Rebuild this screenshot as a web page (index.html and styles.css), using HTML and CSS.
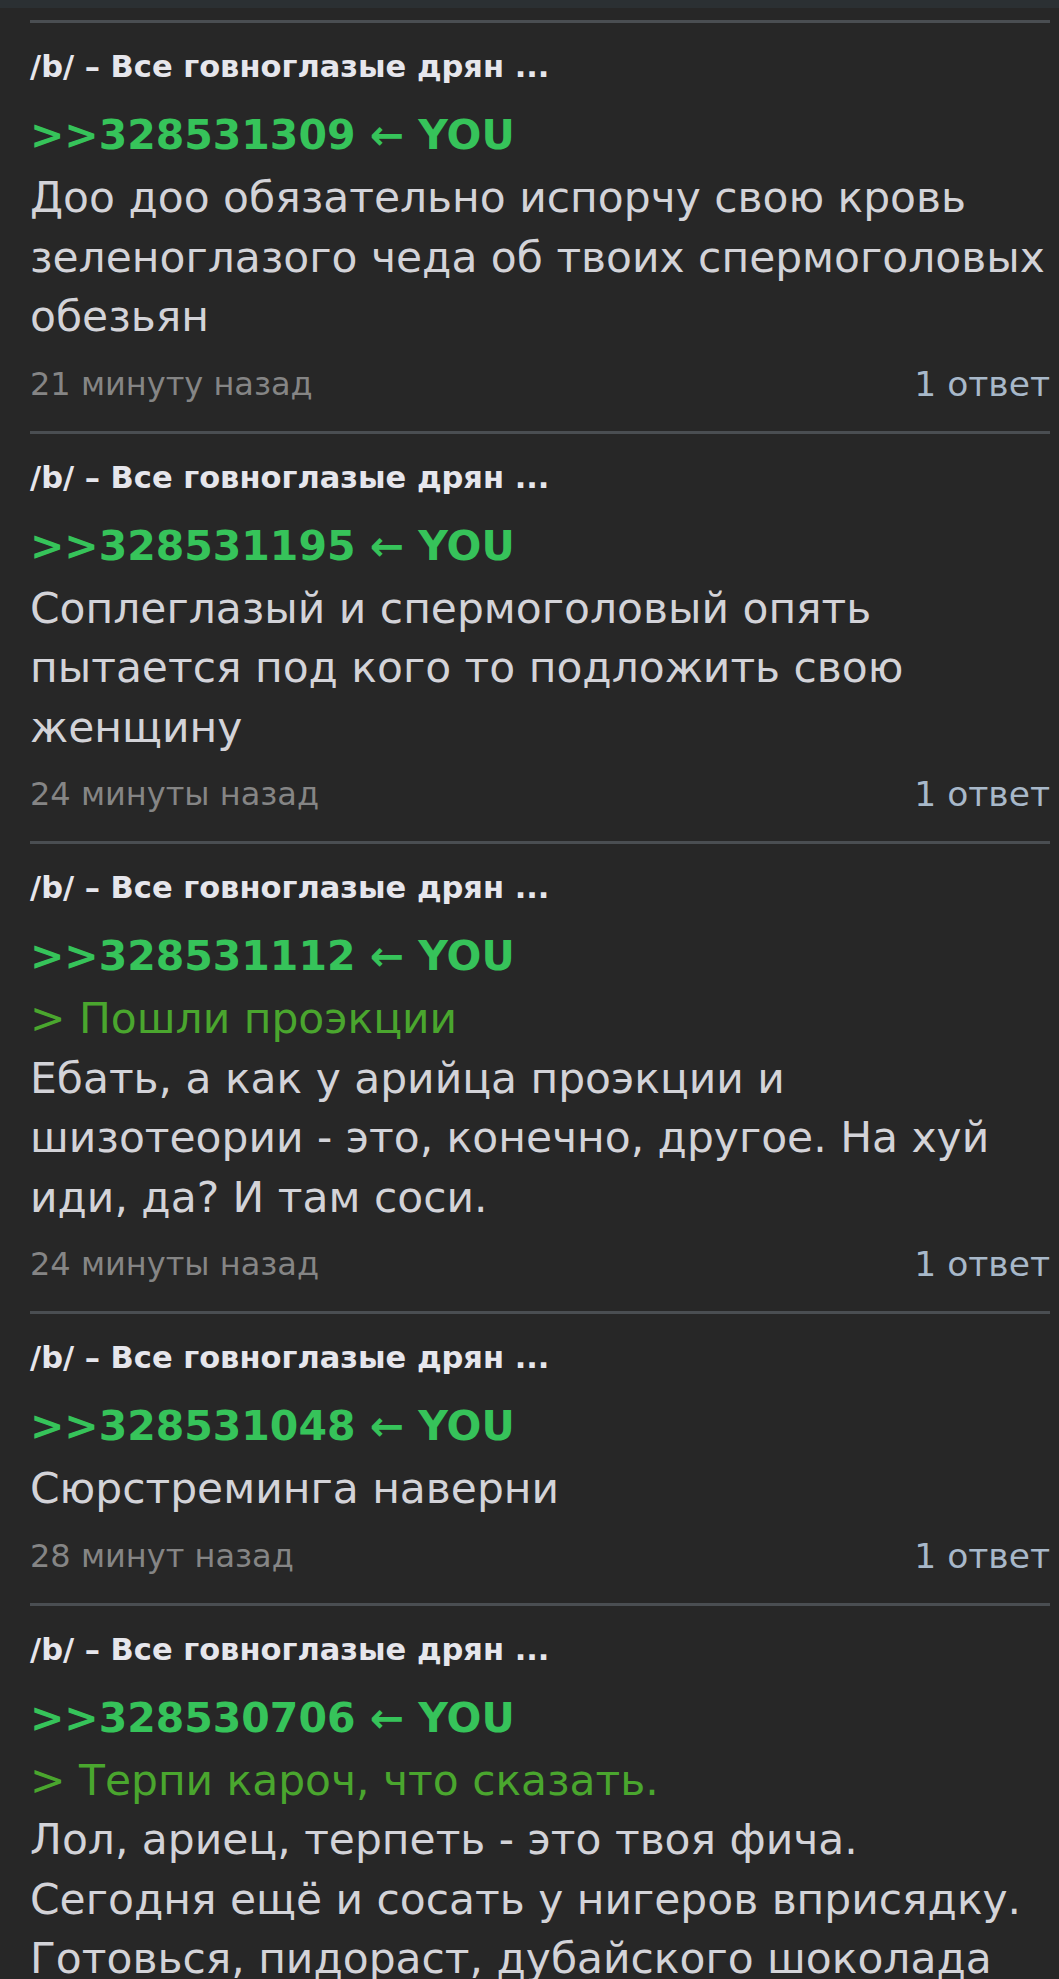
FILE: index.html
```html
<!DOCTYPE html>
<html lang="ru">
<head>
  <meta charset="UTF-8" />
  <meta name="viewport" content="width=device-width, initial-scale=1.0"/>
  <title>Мои посты</title>
  <link rel="stylesheet" href="styles.css">
</head>
<body>

  <div class="topbar"></div>

  <div class="feed">

    <div class="post">
      <div class="post-thread">/b/ – Все говноглазые дрян ...</div>
      <div class="post-ref">&gt;&gt;328531309 ← YOU</div>
      <div class="post-text">Доо доо обязательно испорчу свою кровь зеленоглазого чеда об твоих спермоголовых обезьян</div>
      <div class="post-meta">
        <span class="post-time">21 минуту назад</span>
        <span class="post-replies">1 ответ</span>
      </div>
    </div>

    <div class="post">
      <div class="post-thread">/b/ – Все говноглазые дрян ...</div>
      <div class="post-ref">&gt;&gt;328531195 ← YOU</div>
      <div class="post-text">Соплеглазый и спермоголовый опять пытается под кого то подложить свою женщину</div>
      <div class="post-meta">
        <span class="post-time">24 минуты назад</span>
        <span class="post-replies">1 ответ</span>
      </div>
    </div>

    <div class="post">
      <div class="post-thread">/b/ – Все говноглазые дрян ...</div>
      <div class="post-ref">&gt;&gt;328531112 ← YOU</div>
      <div class="post-text">
        <span class="quote">&gt; Пошли проэкции</span>
        Ебать, а как у арийца проэкции и шизотеории - это, конечно, другое. На хуй иди, да? И там соси.
      </div>
      <div class="post-meta">
        <span class="post-time">24 минуты назад</span>
        <span class="post-replies">1 ответ</span>
      </div>
    </div>

    <div class="post">
      <div class="post-thread">/b/ – Все говноглазые дрян ...</div>
      <div class="post-ref">&gt;&gt;328531048 ← YOU</div>
      <div class="post-text">Сюрстреминга наверни</div>
      <div class="post-meta">
        <span class="post-time">28 минут назад</span>
        <span class="post-replies">1 ответ</span>
      </div>
    </div>

    <div class="post">
      <div class="post-thread">/b/ – Все говноглазые дрян ...</div>
      <div class="post-ref">&gt;&gt;328530706 ← YOU</div>
      <div class="post-text">
        <span class="quote">&gt; Терпи кароч, что сказать.</span>
        Лол, ариец, терпеть - это твоя фича.<br>
        Сегодня ещё и сосать у нигеров вприсядку.<br>
        Готовься, пидораст, дубайского шоколада
      </div>
    </div>

  </div>

</body>
</html>
```

FILE: styles.css
```css
body {
  margin: 0;
  background-color: #272727;
  font-family: "DejaVu Sans", "Noto Sans", sans-serif;
  overflow-x: hidden;
}

.topbar {
  height: 8px;
  background-color: #2b3033;
}

.feed {
  padding-top: 12px;
}

.post {
  margin: 0 9px 0 30px;
  border-top: 3px solid #4a4e52;
  padding: 24px 0 25px;
}

.post-thread {
  font-size: 30.5px;
  font-weight: bold;
  line-height: 40px;
  color: #e6e6ec;
  white-space: nowrap;
}

.post-ref {
  margin-top: 18px;
  font-size: 41px;
  font-weight: bold;
  line-height: 60px;
  color: #36c35a;
}

.post-text {
  margin-top: 3px;
  font-size: 42.4px;
  line-height: 59.5px;
  color: #d3d3d8;
}

.quote {
  display: block;
  color: #4aa62e;
}

.post-meta {
  display: flex;
  justify-content: space-between;
  align-items: center;
  margin-top: 15px;
  line-height: 44px;
}

.post-time {
  font-size: 32px;
  color: #858585;
}

.post-replies {
  font-size: 34.5px;
  color: #a8b8c9;
}
```
